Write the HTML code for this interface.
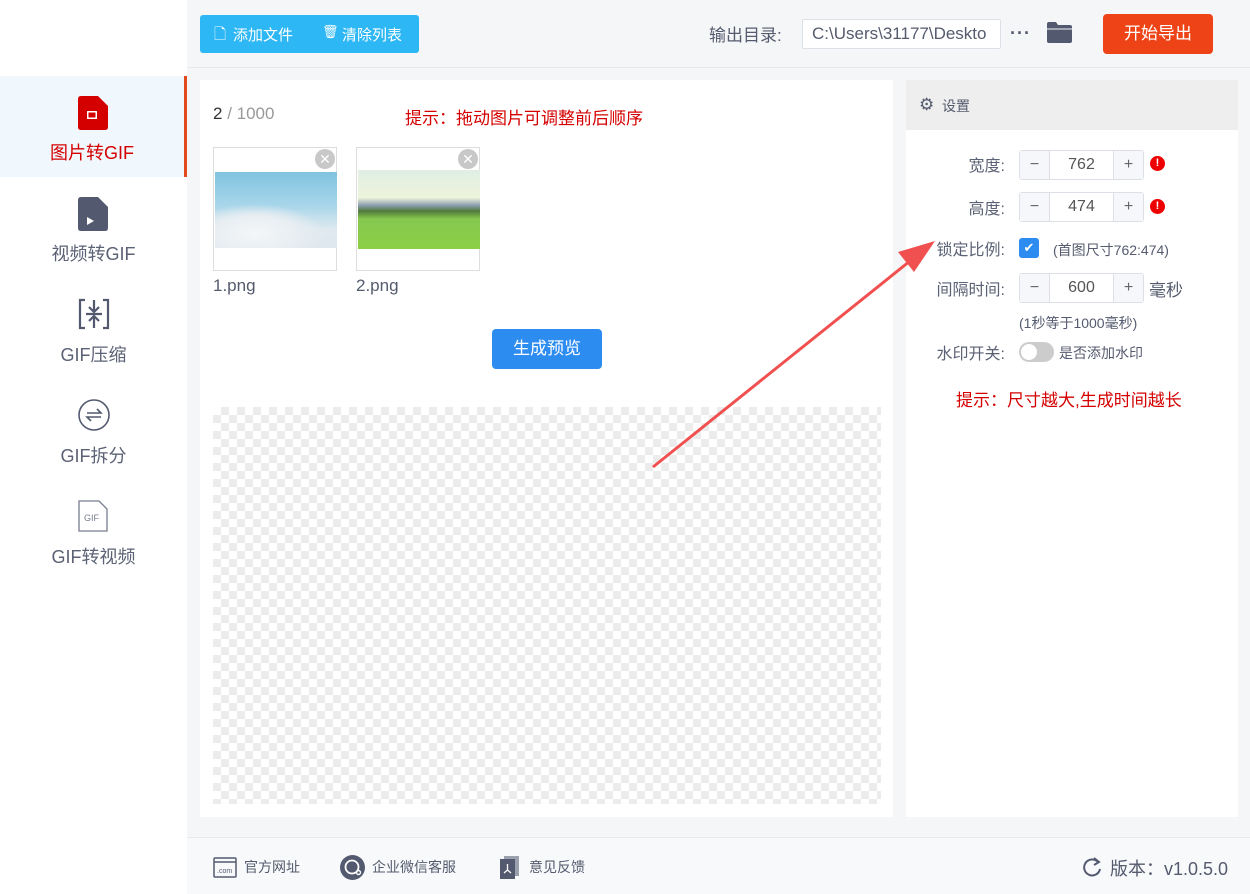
<!DOCTYPE html>
<html><head><meta charset="utf-8"><style>
*{margin:0;padding:0;box-sizing:border-box}
body{width:1250px;height:894px;position:relative;background:#f5f6f8;font-family:"Liberation Sans","Noto Sans CJK SC",sans-serif;color:#555b6e;overflow:hidden}
.abs{position:absolute}
.side{left:0;top:0;width:187px;height:894px;background:#fff}
.nav{position:absolute;left:0;width:187px;height:100px;text-align:center;font-size:18px;color:#5c6275}
.nav .ic{position:absolute;left:78px;top:20px}
.nav .t{position:absolute;left:0;right:0;top:63px}
.btn{color:#fff;font-size:15px}
.cb{position:absolute;width:124px;height:124px;border:1px solid #ddd;background:#fff}
.x{position:absolute;right:1px;top:1px;width:20px;height:20px;border-radius:50%;background:#c8c8c8;color:#fff;font-size:14px;line-height:20px;text-align:center}
.lbl{position:absolute;font-size:16px;color:#5c6275;text-align:right;width:80px;left:925px}
.num{position:absolute;left:1019px;width:125px;height:30px;border:1px solid #dcdfe6;border-radius:3px;background:#fff;font-size:16px}
.num .m,.num .p{position:absolute;top:0;width:30px;height:28px;background:#f5f7fa;text-align:center;line-height:28px;color:#666}
.num .m{left:0;border-right:1px solid #dcdfe6}.num .p{right:0;border-left:1px solid #dcdfe6}
.num .v{position:absolute;left:30px;right:30px;text-align:center;line-height:28px;color:#555}
.warn{position:absolute;left:1150px;width:15px;height:15px;border-radius:50%;background:#e00;color:#fff;font-size:11px;font-weight:bold;text-align:center;line-height:15px}
.chk{background-color:#fff;background-image:linear-gradient(45deg,#ececec 25%,transparent 25%,transparent 75%,#ececec 75%),linear-gradient(45deg,#ececec 25%,transparent 25%,transparent 75%,#ececec 75%);background-size:16px 16px;background-position:0 0,8px 8px}
.ft{position:absolute;top:857px;font-size:14px;color:#555b6e}
</style></head><body>
<div class="abs side"></div>
<div class="nav" style="top:76px;background:#f0f8fe;height:101px;border-right:3px solid #e04a1c">
 <svg class="ic" width="30" height="34" viewBox="0 0 30 34"><path d="M3 0H20L30 10V31Q30 34 27 34H3Q0 34 0 31V3Q0 0 3 0Z" fill="#d40000"/><rect x="9" y="15" width="10" height="8" fill="#fff"/><rect x="10.5" y="16.5" width="7" height="5" fill="#d40000"/></svg>
 <div class="t" style="color:#d40000">图片转GIF</div></div>
<div class="nav" style="top:177px">
 <svg class="ic" width="30" height="34" viewBox="0 0 30 34"><path d="M3 0H20L30 10V31Q30 34 27 34H3Q0 34 0 31V3Q0 0 3 0Z" fill="#535a70"/><path d="M9 20L16 24L9 28Z" fill="#fff"/></svg>
 <div class="t">视频转GIF</div></div>
<div class="nav" style="top:278px">
 <svg class="ic" width="32" height="32" viewBox="0 0 32 32" fill="none" stroke="#535a70" stroke-width="2.2"><path d="M7 2H2V30H7M25 2H30V30H25M16 2V13M11 9L16 14L21 9M8 16H24M16 30V19M11 23L16 18L21 23"/></svg>
 <div class="t">GIF压缩</div></div>
<div class="nav" style="top:379px">
 <svg class="ic" width="32" height="32" viewBox="0 0 32 32" fill="none" stroke="#535a70" stroke-width="1.6"><circle cx="16" cy="16" r="15"/><path d="M9 14H23L19 10M23 18H9L13 22"/></svg>
 <div class="t">GIF拆分</div></div>
<div class="nav" style="top:480px">
 <svg class="ic" width="30" height="32" viewBox="0 0 30 32" fill="none" stroke="#777d90" stroke-width="1.3"><path d="M1 1H21L29 9V31H1Z"/><text x="6" y="21" font-size="9" fill="#777d90" stroke="none" font-family="Liberation Sans">GIF</text></svg>
 <div class="t">GIF转视频</div></div>

<div class="abs" style="left:187px;top:67px;width:1063px;height:1px;background:#e8e9ec"></div>
<div class="abs btn" style="left:200px;top:15px;width:219px;height:38px;background:#2db7f5;border-radius:3px">
 <span class="abs" style="left:14px;top:9px">🗋︎</span><span class="abs" style="left:33px;top:9px">添加文件</span>
 <span class="abs" style="left:122px;top:9px;font-size:13px">🗑︎</span><span class="abs" style="left:142px;top:9px">清除列表</span></div>
<div class="abs" style="left:709px;top:21px;font-size:17px">输出目录:</div>
<div class="abs" style="left:802px;top:19px;width:199px;height:30px;border:1px solid #dcdfe6;background:#fff;border-radius:2px;font-size:17px;line-height:28px;padding-left:9px;overflow:hidden;white-space:nowrap">C:\Users\31177\Deskto</div>
<div class="abs" style="left:1010px;top:23px;font-size:18px;font-weight:bold;letter-spacing:1px">···</div>
<svg class="abs" style="left:1047px;top:22px" width="25" height="21" viewBox="0 0 25 21"><path d="M0 2Q0 0 2 0H9L11 3H23Q25 3 25 5V19Q25 21 23 21H2Q0 21 0 19Z" fill="#535a70"/><path d="M0 7H25" stroke="#f5f6f8" stroke-width="1"/></svg>
<div class="abs" style="left:1103px;top:14px;width:110px;height:40px;background:#ee4316;border-radius:4px;color:#fff;font-size:17px;text-align:center;line-height:40px">开始导出</div>

<div class="abs" style="left:200px;top:80px;width:693px;height:737px;background:#fff"></div>
<div class="abs" style="left:213px;top:104px;font-size:17px;color:#333">2 <span style="color:#999">/ 1000</span></div>
<div class="abs" style="left:405px;top:104px;font-size:17px;color:#d40000">提示：拖动图片可调整前后顺序</div>
<div class="cb" style="left:213px;top:147px"><div class="abs" style="left:1px;top:24px;width:122px;height:76px;background:radial-gradient(ellipse 70px 30px at 40px 62px,#f4f6f8 0%,#e8eef2 60%,transparent 100%),linear-gradient(180deg,#7fc3e0 0%,#a9d6ea 45%,#dfe9ef 75%,#dfe8ee 100%)"></div><div class="x">✕</div></div>
<div class="cb" style="left:356px;top:147px"><div class="abs" style="left:1px;top:22px;width:122px;height:79px;background:linear-gradient(180deg,#dfeee4 0%,#eef4dc 35%,#8a9cae 45%,#4f7a3a 52%,#86c850 62%,#8ccf45 100%)"></div><div class="x">✕</div></div>
<div class="abs" style="left:213px;top:276px;font-size:17px">1.png</div>
<div class="abs" style="left:356px;top:276px;font-size:17px">2.png</div>
<div class="abs" style="left:492px;top:329px;width:110px;height:40px;background:#2d8cf0;border-radius:4px;color:#fff;font-size:17px;text-align:center;line-height:40px">生成预览</div>
<div class="abs chk" style="left:213px;top:407px;width:668px;height:397px"></div>

<div class="abs" style="left:906px;top:80px;width:332px;height:737px;background:#fff"></div>
<div class="abs" style="left:906px;top:80px;width:332px;height:50px;background:#eeeeee"></div>
<div class="abs" style="left:919px;top:95px;font-size:17px;color:#535a70">⚙︎</div>
<div class="abs" style="left:942px;top:96px;font-size:14px">设置</div>
<div class="lbl" style="top:152px">宽度:</div>
<div class="num" style="top:150px"><div class="m">−</div><div class="v">762</div><div class="p">+</div></div><div class="warn" style="top:156px">!</div>
<div class="lbl" style="top:195px">高度:</div>
<div class="num" style="top:192px"><div class="m">−</div><div class="v">474</div><div class="p">+</div></div><div class="warn" style="top:199px">!</div>
<div class="lbl" style="top:236px">锁定比例:</div>
<div class="abs" style="left:1019px;top:238px;width:20px;height:20px;background:#2d8cf0;border-radius:3px;color:#fff;font-size:13px;text-align:center;line-height:20px">✔</div>
<div class="abs" style="left:1053px;top:240px;font-size:14px">(首图尺寸762:474)</div>
<div class="lbl" style="top:276px">间隔时间:</div>
<div class="num" style="top:273px"><div class="m">−</div><div class="v">600</div><div class="p">+</div></div>
<div class="abs" style="left:1149px;top:276px;font-size:17px">毫秒</div>
<div class="abs" style="left:1019px;top:313px;font-size:14px">(1秒等于1000毫秒)</div>
<div class="lbl" style="top:340px">水印开关:</div>
<div class="abs" style="left:1019px;top:342px;width:35px;height:20px;border-radius:10px;background:#ccc"><div class="abs" style="left:2px;top:2px;width:16px;height:16px;border-radius:50%;background:#fff"></div></div>
<div class="abs" style="left:1059px;top:343px;font-size:14px">是否添加水印</div>
<div class="abs" style="left:956px;top:386px;font-size:17px;color:#d40000">提示：尺寸越大,生成时间越长</div>

<svg class="abs" style="left:0;top:0" width="1250" height="894"><line x1="653" y1="467" x2="915" y2="257" stroke="#f05050" stroke-width="3"/><path d="M935 241L898 252L914 272Z" fill="#f05050"/></svg>

<div class="abs" style="left:187px;top:837px;width:1063px;height:57px;background:#f8f9fb;border-top:1px solid #e8e9ec"></div>
<svg class="abs" style="left:213px;top:857px" width="24" height="21" viewBox="0 0 24 21" fill="none" stroke="#535a70" stroke-width="1.5"><rect x="1" y="1" width="22" height="19" rx="1"/><path d="M1 5H23"/><text x="4" y="16" font-size="7" fill="#535a70" stroke="none" font-family="Liberation Sans">.com</text></svg>
<div class="ft" style="left:244px">官方网址</div>
<svg class="abs" style="left:340px;top:855px" width="25" height="25" viewBox="0 0 25 25"><circle cx="12.5" cy="12.5" r="12.5" fill="#535a70"/><circle cx="12" cy="12" r="6.5" fill="none" stroke="#fff" stroke-width="1.8"/><circle cx="18.5" cy="17.5" r="2" fill="none" stroke="#fff" stroke-width="1.4"/></svg>
<div class="ft" style="left:372px">企业微信客服</div>
<svg class="abs" style="left:500px;top:856px" width="19" height="23" viewBox="0 0 19 23"><rect x="4" y="0" width="15" height="20" fill="#9aa0ae"/><rect x="0" y="3" width="15" height="20" fill="#535a70"/><path d="M7.5 8V14L4 17M7.5 14L11 17" stroke="#fff" stroke-width="1.3" fill="none"/></svg>
<div class="ft" style="left:529px">意见反馈</div>
<svg class="abs" style="left:1083px;top:857px" width="19" height="20" viewBox="0 0 19 20" fill="none" stroke="#535a70" stroke-width="2"><path d="M15 5A8 8 0 1 0 17 12"/><path d="M11 1L16 5L11 8" /></svg>
<div class="abs" style="left:1110px;top:855px;font-size:18px;color:#555b6e">版本：v1.0.5.0</div>
</body></html>
